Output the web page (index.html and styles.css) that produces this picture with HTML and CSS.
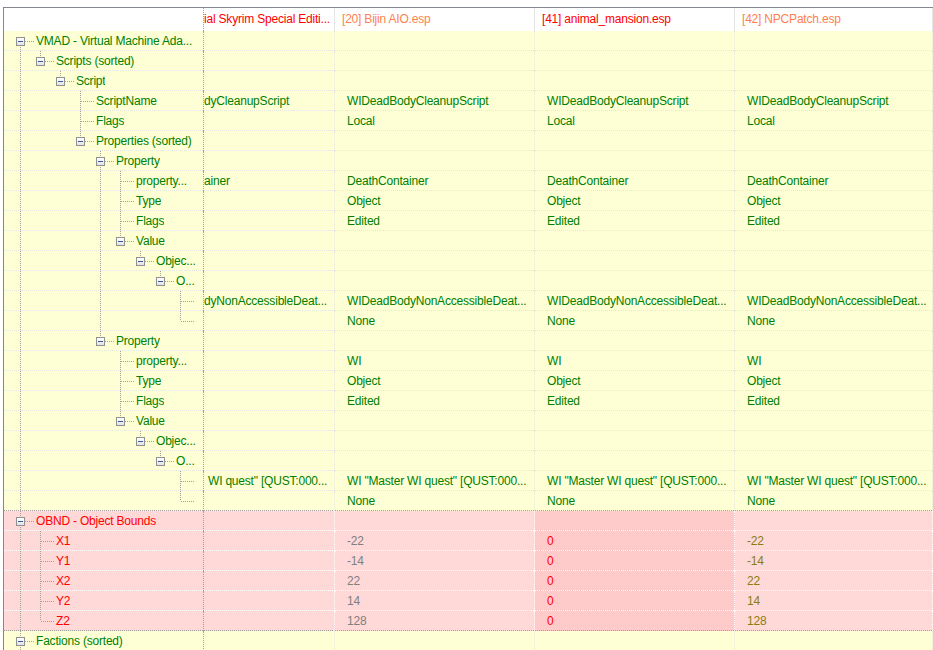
FILE: index.html
```html
<html>
<head>
<title>View</title>
<link rel="stylesheet" href="styles.css">
</head>
<body>
<div class="view">
	<div class="head">
		<div class="tc"></div>
		<div class="c1 red">ial Skyrim Special Editi...</div>
		<div class="coral">[20] Bijin AIO.esp</div>
		<div class="red">[41] animal_mansion.esp</div>
		<div class="coral">[42] NPCPatch.esp</div>
	</div>

	<div class="row"><div class="tc"><span class="k first"><span class="box"></span></span><span class="lbl">VMAD - Virtual Machine Ada...</span></div><div class="c1"></div><div></div><div class="c3"></div><div></div></div>
	<div class="row"><div class="tc"><span class="g v"></span><span class="k end"><span class="box"></span></span><span class="lbl">Scripts (sorted)</span></div><div class="c1"></div><div></div><div class="c3"></div><div></div></div>
	<div class="row"><div class="tc"><span class="g v"></span><span class="g"></span><span class="k end"><span class="box"></span></span><span class="lbl">Script</span></div><div class="c1"></div><div></div><div class="c3"></div><div></div></div>
	<div class="row"><div class="tc"><span class="g v"></span><span class="g"></span><span class="g"></span><span class="k"></span><span class="lbl">ScriptName</span></div><div class="c1">dyCleanupScript</div><div>WIDeadBodyCleanupScript</div><div class="c3">WIDeadBodyCleanupScript</div><div>WIDeadBodyCleanupScript</div></div>
	<div class="row"><div class="tc"><span class="g v"></span><span class="g"></span><span class="g"></span><span class="k"></span><span class="lbl">Flags</span></div><div class="c1"></div><div>Local</div><div class="c3">Local</div><div>Local</div></div>
	<div class="row"><div class="tc"><span class="g v"></span><span class="g"></span><span class="g"></span><span class="k end"><span class="box"></span></span><span class="lbl">Properties (sorted)</span></div><div class="c1"></div><div></div><div class="c3"></div><div></div></div>
	<div class="row"><div class="tc"><span class="g v"></span><span class="g"></span><span class="g"></span><span class="g"></span><span class="k"><span class="box"></span></span><span class="lbl">Property</span></div><div class="c1"></div><div></div><div class="c3"></div><div></div></div>
	<div class="row"><div class="tc"><span class="g v"></span><span class="g"></span><span class="g"></span><span class="g"></span><span class="g v"></span><span class="k"></span><span class="lbl">property...</span></div><div class="c1">ainer</div><div>DeathContainer</div><div class="c3">DeathContainer</div><div>DeathContainer</div></div>
	<div class="row"><div class="tc"><span class="g v"></span><span class="g"></span><span class="g"></span><span class="g"></span><span class="g v"></span><span class="k"></span><span class="lbl">Type</span></div><div class="c1"></div><div>Object</div><div class="c3">Object</div><div>Object</div></div>
	<div class="row"><div class="tc"><span class="g v"></span><span class="g"></span><span class="g"></span><span class="g"></span><span class="g v"></span><span class="k"></span><span class="lbl">Flags</span></div><div class="c1"></div><div>Edited</div><div class="c3">Edited</div><div>Edited</div></div>
	<div class="row"><div class="tc"><span class="g v"></span><span class="g"></span><span class="g"></span><span class="g"></span><span class="g v"></span><span class="k end"><span class="box"></span></span><span class="lbl">Value</span></div><div class="c1"></div><div></div><div class="c3"></div><div></div></div>
	<div class="row"><div class="tc"><span class="g v"></span><span class="g"></span><span class="g"></span><span class="g"></span><span class="g v"></span><span class="g"></span><span class="k end"><span class="box"></span></span><span class="lbl">Objec...</span></div><div class="c1"></div><div></div><div class="c3"></div><div></div></div>
	<div class="row"><div class="tc"><span class="g v"></span><span class="g"></span><span class="g"></span><span class="g"></span><span class="g v"></span><span class="g"></span><span class="g"></span><span class="k end"><span class="box"></span></span><span class="lbl">O...</span></div><div class="c1"></div><div></div><div class="c3"></div><div></div></div>
	<div class="row"><div class="tc"><span class="g v"></span><span class="g"></span><span class="g"></span><span class="g"></span><span class="g v"></span><span class="g"></span><span class="g"></span><span class="g"></span><span class="k"></span></div><div class="c1">dyNonAccessibleDeat...</div><div>WIDeadBodyNonAccessibleDeat...</div><div class="c3">WIDeadBodyNonAccessibleDeat...</div><div>WIDeadBodyNonAccessibleDeat...</div></div>
	<div class="row"><div class="tc"><span class="g v"></span><span class="g"></span><span class="g"></span><span class="g"></span><span class="g v"></span><span class="g"></span><span class="g"></span><span class="g"></span><span class="k end"></span></div><div class="c1"></div><div>None</div><div class="c3">None</div><div>None</div></div>
	<div class="row"><div class="tc"><span class="g v"></span><span class="g"></span><span class="g"></span><span class="g"></span><span class="k end"><span class="box"></span></span><span class="lbl">Property</span></div><div class="c1"></div><div></div><div class="c3"></div><div></div></div>
	<div class="row"><div class="tc"><span class="g v"></span><span class="g"></span><span class="g"></span><span class="g"></span><span class="g"></span><span class="k"></span><span class="lbl">property...</span></div><div class="c1"></div><div>WI</div><div class="c3">WI</div><div>WI</div></div>
	<div class="row"><div class="tc"><span class="g v"></span><span class="g"></span><span class="g"></span><span class="g"></span><span class="g"></span><span class="k"></span><span class="lbl">Type</span></div><div class="c1"></div><div>Object</div><div class="c3">Object</div><div>Object</div></div>
	<div class="row"><div class="tc"><span class="g v"></span><span class="g"></span><span class="g"></span><span class="g"></span><span class="g"></span><span class="k"></span><span class="lbl">Flags</span></div><div class="c1"></div><div>Edited</div><div class="c3">Edited</div><div>Edited</div></div>
	<div class="row"><div class="tc"><span class="g v"></span><span class="g"></span><span class="g"></span><span class="g"></span><span class="g"></span><span class="k end"><span class="box"></span></span><span class="lbl">Value</span></div><div class="c1"></div><div></div><div class="c3"></div><div></div></div>
	<div class="row"><div class="tc"><span class="g v"></span><span class="g"></span><span class="g"></span><span class="g"></span><span class="g"></span><span class="g"></span><span class="k end"><span class="box"></span></span><span class="lbl">Objec...</span></div><div class="c1"></div><div></div><div class="c3"></div><div></div></div>
	<div class="row"><div class="tc"><span class="g v"></span><span class="g"></span><span class="g"></span><span class="g"></span><span class="g"></span><span class="g"></span><span class="g"></span><span class="k end"><span class="box"></span></span><span class="lbl">O...</span></div><div class="c1"></div><div></div><div class="c3"></div><div></div></div>
	<div class="row"><div class="tc"><span class="g v"></span><span class="g"></span><span class="g"></span><span class="g"></span><span class="g"></span><span class="g"></span><span class="g"></span><span class="g"></span><span class="k"></span></div><div class="c1 cut">WI quest" [QUST:000...</div><div>WI "Master WI quest" [QUST:000...</div><div class="c3">WI "Master WI quest" [QUST:000...</div><div>WI "Master WI quest" [QUST:000...</div></div>
	<div class="row sep"><div class="tc"><span class="g v"></span><span class="g"></span><span class="g"></span><span class="g"></span><span class="g"></span><span class="g"></span><span class="g"></span><span class="g"></span><span class="k end"></span></div><div class="c1"></div><div>None</div><div class="c3">None</div><div>None</div></div>

	<div class="row pk"><div class="tc"><span class="k"><span class="box"></span></span><span class="lbl">OBND - Object Bounds</span></div><div class="c1"></div><div></div><div class="c3"></div><div></div></div>
	<div class="row pk"><div class="tc"><span class="g v"></span><span class="k"></span><span class="lbl">X1</span></div><div class="c1"></div><div class="gray">-22</div><div class="c3">0</div><div class="olive">-22</div></div>
	<div class="row pk"><div class="tc"><span class="g v"></span><span class="k"></span><span class="lbl">Y1</span></div><div class="c1"></div><div class="gray">-14</div><div class="c3">0</div><div class="olive">-14</div></div>
	<div class="row pk"><div class="tc"><span class="g v"></span><span class="k"></span><span class="lbl">X2</span></div><div class="c1"></div><div class="gray">22</div><div class="c3">0</div><div class="olive">22</div></div>
	<div class="row pk"><div class="tc"><span class="g v"></span><span class="k"></span><span class="lbl">Y2</span></div><div class="c1"></div><div class="gray">14</div><div class="c3">0</div><div class="olive">14</div></div>
	<div class="row pk sep"><div class="tc"><span class="g v"></span><span class="k end"></span><span class="lbl">Z2</span></div><div class="c1"></div><div class="gray">128</div><div class="c3">0</div><div class="olive">128</div></div>

	<div class="row"><div class="tc"><span class="k"><span class="box"></span></span><span class="lbl">Factions (sorted)</span></div><div class="c1"></div><div></div><div class="c3"></div><div></div></div>
</div>
</body>
</html>
```

FILE: styles.css
```css
html, body {
	margin: 0;
	height: 100%;
	overflow: hidden;
	background: #fff;
}
body {
	font-family: "Liberation Sans", Arial, sans-serif;
	font-size: 12px;
	letter-spacing: -0.2px;
}
.view {
	margin: 7px 0 0 3px;
	border-top: 1px solid #828790;
	border-left: 1px solid #828790;
}
.head, .row {
	display: grid;
	grid-template-columns: 200px 131px 200px 200px 1fr;
}

/* column captions */
.head {
	height: 23px;
	line-height: 23px;
	background: #fff;
}
.head > div {
	border-right: 1px solid #e5e5e5;
	padding-left: 7px;
	white-space: nowrap;
	overflow: hidden;
}
.head > .tc {
	border-right: 1px dotted #a0a0a0;
	padding: 0;
}
.head > .c1 {
	padding-left: 0;
}
.red { color: #ff0000; }
.coral { color: #ff7f50; }

/* rows */
.row {
	height: 20px;
	line-height: 20px;
	background: #ffffd5;
	color: #008000;
	--dot: #e6e6e0;
	--line: #e6e6e0;
}
.row > div {
	background: repeating-linear-gradient(90deg, var(--line) 0 1px, transparent 1px 2px) left bottom / 100% 1px no-repeat;
	border-right: 1px dotted var(--dot);
	padding-left: 12px;
	white-space: nowrap;
	overflow: hidden;
}
.row > .c1 {
	padding-left: 0;
}
.row > .cut {
	padding-left: 4px;
}
.row.pk {
	background: #ffd8d8;
	color: #ff0000;
	--dot: #fff;
	--line: #fff;
}
.row.pk > .c3 {
	background-color: #ffcaca;
}
.row.sep {
	--line: #a0a0a0;
}
.gray { color: #808080; }
.row > .olive { color: #8a7d10; }

/* tree column */
.row > .tc {
	display: flex;
	padding-left: 6px;
	border-right: 1px dotted #a0a0a0;
}
.g, .k {
	flex: none;
	height: 20px;
}
.g {
	width: 20px;
}
.g.v {
	background: repeating-linear-gradient(#a0a0a0 0 1px, transparent 1px 2px) 10px 0 / 1px 20px no-repeat;
}
.k {
	width: 26px;
	background:
		repeating-linear-gradient(90deg, #a0a0a0 0 1px, transparent 1px 2px) 11px 10px / 13px 1px no-repeat,
		repeating-linear-gradient(#a0a0a0 0 1px, transparent 1px 2px) 10px 0 / 1px 20px no-repeat;
}
.k.end {
	background:
		repeating-linear-gradient(90deg, #a0a0a0 0 1px, transparent 1px 2px) 11px 10px / 13px 1px no-repeat,
		repeating-linear-gradient(#a0a0a0 0 1px, transparent 1px 2px) 10px 0 / 1px 10px no-repeat;
}
.k.first {
	background:
		repeating-linear-gradient(90deg, #a0a0a0 0 1px, transparent 1px 2px) 11px 10px / 13px 1px no-repeat,
		repeating-linear-gradient(#a0a0a0 0 1px, transparent 1px 2px) 10px 10px / 1px 10px no-repeat;
}
.box {
	display: block;
	width: 9px;
	height: 9px;
	margin: 6px 0 0 6px;
	box-sizing: border-box;
	border: 1px solid #919191;
	background:
		linear-gradient(#3a5a9c, #3a5a9c) center / 5px 1px no-repeat,
		linear-gradient(#fff, #e2e2e2);
}
.lbl {
	overflow: hidden;
	white-space: nowrap;
}
```
